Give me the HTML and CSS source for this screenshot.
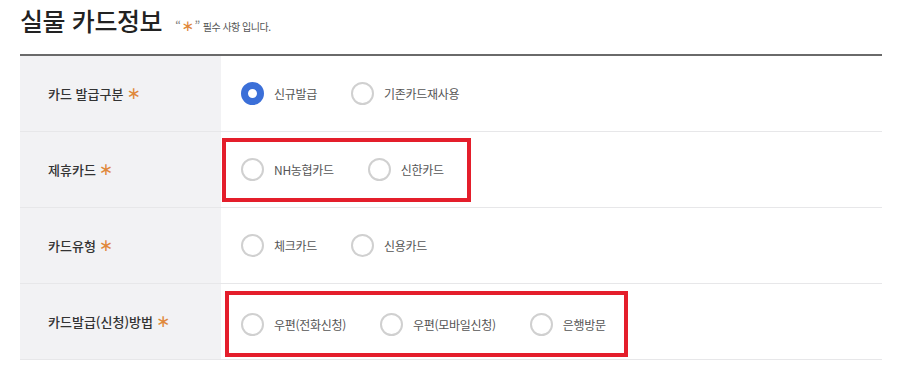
FILE: index.html
```html
<!DOCTYPE html>
<html lang="ko">
<head>
<meta charset="utf-8">
<title>실물 카드정보</title>
<link rel="stylesheet" href="styles.css">
</head>
<body>
<div class="page">
  <div class="heading">
    <h2 class="title">실물 카드정보</h2>
    <p class="note"><span class="quote">“</span><span class="req">∗</span><span class="quote">”</span><span class="note-text">필수 사항 입니다.</span></p>
  </div>
  <div class="form-table">
    <div class="row">
      <div class="label">카드 발급구분 <span class="req">∗</span></div>
      <div class="field">
        <div class="options">
          <span class="option"><span class="radio checked"></span><span class="opt-text">신규발급</span></span>
          <span class="option"><span class="radio"></span><span class="opt-text">기존카드재사용</span></span>
        </div>
      </div>
    </div>
    <div class="row">
      <div class="label">제휴카드 <span class="req">∗</span></div>
      <div class="field">
        <div class="options highlight hl-partner">
          <span class="option"><span class="radio"></span><span class="opt-text">NH농협카드</span></span>
          <span class="option"><span class="radio"></span><span class="opt-text">신한카드</span></span>
        </div>
      </div>
    </div>
    <div class="row">
      <div class="label">카드유형 <span class="req">∗</span></div>
      <div class="field">
        <div class="options">
          <span class="option"><span class="radio"></span><span class="opt-text">체크카드</span></span>
          <span class="option"><span class="radio"></span><span class="opt-text">신용카드</span></span>
        </div>
      </div>
    </div>
    <div class="row">
      <div class="label">카드발급(신청)방법 <span class="req">∗</span></div>
      <div class="field">
        <div class="options highlight hl-method">
          <span class="option"><span class="radio"></span><span class="opt-text">우편(전화신청)</span></span>
          <span class="option"><span class="radio"></span><span class="opt-text">우편(모바일신청)</span></span>
          <span class="option"><span class="radio"></span><span class="opt-text">은행방문</span></span>
        </div>
      </div>
    </div>
  </div>
</div>
</body>
</html>
```

FILE: styles.css
```css
html, body {
  margin: 0;
  padding: 0;
  background: #ffffff;
}

body {
  font-family: "Noto Sans CJK KR", "Noto Sans", sans-serif;
  color: #333333;
}

.page {
  width: 862px;
  padding: 3px 0 0 20px;
}

.heading {
  display: flex;
  align-items: baseline;
  height: 51px;
}

.title {
  margin: 0;
  font-size: 25px;
  line-height: 34px;
  font-weight: 500;
  color: #222222;
  letter-spacing: -0.4px;
}

.note {
  margin: 0 0 0 13px;
  font-size: 10px;
  color: #555555;
  letter-spacing: -0.5px;
}

.note-text {
  margin-left: 3px;
}

.quote {
  color: #777777;
  font-size: 12px;
}

.req {
  color: #e0883a;
  font-family: "DejaVu Sans", sans-serif;
  font-size: 17px;
  line-height: 1;
  font-weight: 400;
}

.note .req {
  font-size: 15px;
  margin: 0 1px;
}

.form-table {
  border-top: 2px solid #6a6a6a;
}

.row {
  display: grid;
  grid-template-columns: 201px 1fr;
  height: 75px;
  border-bottom: 1px solid #e7e7e9;
}

.label {
  background: #f2f2f4;
  display: flex;
  align-items: center;
  gap: 3px;
  padding-left: 28px;
  font-size: 13px;
  font-weight: 500;
  color: #333333;
}

.field {
  display: flex;
  align-items: center;
  padding-left: 20px;
}

.options {
  display: flex;
  align-items: center;
  gap: 34px;
}

.option {
  display: flex;
  align-items: center;
  gap: 10px;
}

.radio {
  width: 23px;
  height: 23px;
  box-sizing: border-box;
  border: 2px solid #d0d0d0;
  border-radius: 50%;
  background: #ffffff;
  flex: none;
}

.radio.checked {
  border: 7px solid #3b6fd8;
}

.opt-text {
  font-size: 12px;
  color: #555555;
  letter-spacing: -0.3px;
}

.highlight {
  box-sizing: border-box;
  border: 4px solid #e41e2b;
}

.hl-partner {
  width: 249px;
  height: 64px;
  margin-left: -19px;
  padding-left: 15px;
}

.hl-method {
  width: 403px;
  height: 66px;
  margin-left: -16px;
  margin-top: 5px;
  padding-left: 12px;
}
```
